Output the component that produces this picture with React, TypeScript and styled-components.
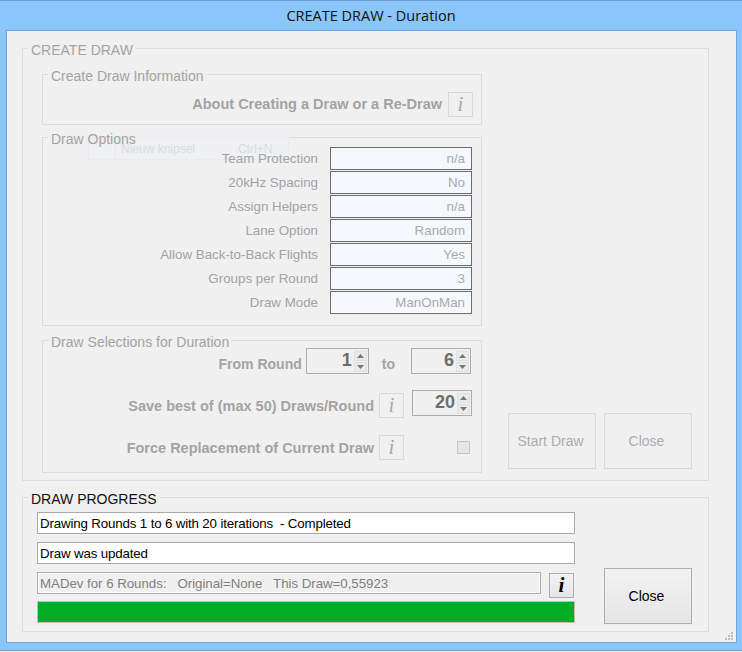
import * as React from 'react';
import styled, { createGlobalStyle } from 'styled-components';

const GlobalStyle = createGlobalStyle`
    html, body {
        margin: 0;
        padding: 0;
        background: #f0f0f0;
    }
    body {
        font-family: "Liberation Sans", Arial, sans-serif;
        font-size: 14px;
    }
`;

const DISABLED = '#a3a3a3';
const LINE = '#dcdcdc';

const OPTIONS = [
    ['Team Protection', 'n/a'],
    ['20kHz Spacing', 'No'],
    ['Assign Helpers', 'n/a'],
    ['Lane Option', 'Random'],
    ['Allow Back-to-Back Flights', 'Yes'],
    ['Groups per Round', '3'],
    ['Draw Mode', 'ManOnMan'],
];

const Spinner: React.FC<{ value: number; width: number }> = ({ value, width }) => (
    <SpinBox $width={width}>
        <SpinValue>{value}</SpinValue>
        <SpinButtons>
            <SpinButton>
                <svg width="7" height="4" viewBox="0 0 7 4">
                    <path d="M3.5 0L7 4H0z" fill="#777" />
                </svg>
            </SpinButton>
            <SpinButton>
                <svg width="7" height="4" viewBox="0 0 7 4">
                    <path d="M0 0h7L3.5 4z" fill="#777" />
                </svg>
            </SpinButton>
        </SpinButtons>
    </SpinBox>
);

const App: React.FC = () => (
    <Window>
        <GlobalStyle />
        <TitleBar>CREATE DRAW - Duration</TitleBar>
        <Panel>
            <Group $height={443}>
                <Legend>CREATE DRAW</Legend>
                <CreateLayout>
                    <LeftColumn>
                        <Group $height={61}>
                            <Legend>Create Draw Information</Legend>
                            <AboutRow>
                                <AboutLabel>About Creating a Draw or a Re-Draw</AboutLabel>
                                <InfoButton disabled>i</InfoButton>
                            </AboutRow>
                        </Group>
                        <Group $height={199}>
                            <Legend>Draw Options</Legend>
                            <GhostMenu>
                                <GhostIcon />
                                <GhostText>Nieuw knipsel</GhostText>
                                <GhostText>Ctrl+N</GhostText>
                            </GhostMenu>
                            <OptionList>
                                {OPTIONS.map(([label, value]) => (
                                    <OptionRow key={label}>
                                        <OptionLabel>{label}</OptionLabel>
                                        <OptionValue>{value}</OptionValue>
                                    </OptionRow>
                                ))}
                            </OptionList>
                        </Group>
                        <SelectionGroup $height={143}>
                            <Legend>Draw Selections for Duration</Legend>
                            <SelectionList>
                                <RoundRow>
                                    <RoundLabel>From Round</RoundLabel>
                                    <Spinner value={1} width={63} />
                                    <ToLabel>to</ToLabel>
                                    <Spinner value={6} width={60} />
                                </RoundRow>
                                <SaveRow>
                                    <BoldLabel>Save best of (max 50) Draws/Round</BoldLabel>
                                    <InfoButton disabled>i</InfoButton>
                                    <RaisedSpinner>
                                        <Spinner value={20} width={60} />
                                    </RaisedSpinner>
                                </SaveRow>
                                <ForceRow>
                                    <BoldLabel>Force Replacement of Current Draw</BoldLabel>
                                    <InfoButton disabled>i</InfoButton>
                                    <CheckBox />
                                </ForceRow>
                            </SelectionList>
                        </SelectionGroup>
                    </LeftColumn>
                    <DisabledActions>
                        <ActionButton disabled>Start Draw</ActionButton>
                        <ActionButton disabled>Close</ActionButton>
                    </DisabledActions>
                </CreateLayout>
            </Group>
            <ProgressGroup $height={145}>
                <ProgressLegend>DRAW PROGRESS</ProgressLegend>
                <ProgressLayout>
                    <ProgressColumn>
                        <MessageField>Drawing Rounds 1 to 6 with 20 iterations&nbsp; - Completed</MessageField>
                        <MessageField>Draw was updated</MessageField>
                        <DevRow>
                            <DevField>
                                MADev for 6 Rounds:&nbsp;&nbsp; Original=None&nbsp;&nbsp; This Draw=0,55923
                            </DevField>
                            <DevInfoButton>i</DevInfoButton>
                        </DevRow>
                        <ProgressBar />
                    </ProgressColumn>
                    <ProgressClose>Close</ProgressClose>
                </ProgressLayout>
            </ProgressGroup>
            <Grip width="8" height="8" viewBox="0 0 8 8">
                <path
                    d="M6 0h2v2H6zM3 3h2v2H3zM6 3h2v2H6zM0 6h2v2H0zM3 6h2v2H3zM6 6h2v2H6z"
                    fill="#bdbdbd"
                />
            </Grip>
        </Panel>
    </Window>
);

const Window = styled.div`
    box-sizing: border-box;
    width: 742px;
    height: 651px;
    overflow: hidden;
    background: #8ac5fb;
    border-top: 1px solid #6e9fd0;
    border-bottom: 1px solid #6e9fd0;
`;

const TitleBar = styled.div`
    height: 29px;
    line-height: 29px;
    text-align: center;
    font-family: "Open Sans", sans-serif;
    font-size: 14.5px;
    color: #111;
`;

const Panel = styled.div`
    position: relative;
    box-sizing: border-box;
    width: 731px;
    height: 613px;
    margin-left: 6px;
    padding: 7px 27px 0 15px;
    background: #f0f0f0;
    border: 1px solid #6fa5dc;
`;

const Group = styled.fieldset<{ $height: number }>`
    box-sizing: border-box;
    height: ${({ $height }) => $height}px;
    min-width: 0;
    margin: 0;
    padding: 0;
    border: 1px solid ${LINE};
`;

const SelectionGroup = styled(Group)`
    margin-top: 2px;
`;

const ProgressGroup = styled(Group)`
    margin-top: 6px;
`;

const Legend = styled.legend`
    position: relative;
    z-index: 1;
    margin-left: 5px;
    padding: 4px 3px 0;
    line-height: 16px;
    font-size: 14px;
    color: ${DISABLED};
`;

const ProgressLegend = styled(Legend)`
    color: #111;
`;

const CreateLayout = styled.div`
    display: flex;
    align-items: flex-end;
    gap: 26px;
    padding-left: 19px;
`;

const LeftColumn = styled.div`
    display: flex;
    flex-direction: column;
    gap: 2px;
    width: 440px;
    margin: 6px 0 7px;
`;

const AboutRow = styled.div`
    display: flex;
    justify-content: flex-end;
    align-items: center;
    gap: 6px;
    padding: 8px 8px 0 0;
`;

const BoldLabel = styled.span`
    font-weight: 700;
    font-size: 14.5px;
    color: ${DISABLED};
`;

const AboutLabel = styled(BoldLabel)`
    margin-top: -2px;
`;

const InfoButton = styled.button`
    box-sizing: border-box;
    flex: none;
    width: 25px;
    height: 25px;
    padding: 0;
    font-family: "Liberation Serif", serif;
    font-style: italic;
    font-weight: 700;
    font-size: 21px;
    line-height: 23px;
    color: #000;
    background: linear-gradient(#f2f2f2, #e6e6e6);
    border: 1px solid #adadad;

    &:disabled {
        color: #a9a9a9;
        font-weight: 400;
        background: #f0f0f0;
        border-color: #d9d9d9;
    }
`;

const GhostMenu = styled.div`
    position: absolute;
    display: flex;
    align-items: center;
    box-sizing: border-box;
    width: 201px;
    height: 23px;
    margin: -10px 0 0 45px;
    background: #eef0f2;
    border: 1px solid #e8eaec;
`;

const GhostIcon = styled.div`
    width: 26px;
    height: 21px;
    border-right: 1px solid #e6e8ea;
`;

const GhostText = styled.span`
    font-size: 12px;
    color: #dadcde;

    &:nth-child(2) {
        margin-left: 5px;
    }

    &:nth-child(3) {
        margin-left: 43px;
    }
`;

const OptionList = styled.div`
    position: relative;
    display: flex;
    flex-direction: column;
    gap: 1px;
    padding-right: 9px;
`;

const OptionRow = styled.div`
    display: flex;
    justify-content: flex-end;
    align-items: center;
    gap: 12px;
`;

const OptionLabel = styled.span`
    font-size: 13.33px;
    color: ${DISABLED};
`;

const OptionValue = styled.div`
    box-sizing: border-box;
    width: 142px;
    height: 23px;
    line-height: 21px;
    padding-right: 6px;
    text-align: right;
    font-size: 13.33px;
    color: #aaaaaa;
    background: #f5f9ff;
    border: 1px solid #6d6d6d;
`;

const SelectionList = styled.div`
    display: flex;
    flex-direction: column;
    padding-right: 9px;
`;

const RoundRow = styled.div`
    display: flex;
    justify-content: flex-end;
    align-items: center;
    height: 26px;
    margin: -2px 1px 0 0;
`;

const RoundLabel = styled(BoldLabel)`
    margin: 6px 4px 0 0;
    font-size: 14px;
`;

const ToLabel = styled(BoldLabel)`
    margin: 6px 16px 0 13px;
    font-size: 14px;
`;

const SaveRow = styled.div`
    display: flex;
    justify-content: flex-end;
    align-items: center;
    gap: 5px;
    margin-top: 19px;
`;

const RaisedSpinner = styled.div`
    align-self: flex-start;
    height: 23px;
    margin: -3px 0 0 3px;
`;

const ForceRow = styled.div`
    display: flex;
    justify-content: flex-end;
    align-items: center;
    gap: 5px;
    margin-top: 17px;
`;

const CheckBox = styled.div`
    box-sizing: border-box;
    width: 13px;
    height: 13px;
    margin: 0 2px 0 48px;
    background: #e6e6e6;
    border: 1px solid #c4c4c4;
`;

const SpinBox = styled.div<{ $width: number }>`
    box-sizing: border-box;
    display: flex;
    justify-content: flex-end;
    align-items: center;
    width: ${({ $width }) => $width}px;
    height: 26px;
    padding-right: 1px;
    background: #f0f0f0;
    border: 1px solid #acacb4;
`;

const SpinValue = styled.span`
    margin: -1px 2px 0 0;
    font-size: 18px;
    font-weight: 700;
    color: #6d6d6d;
`;

const SpinButtons = styled.div`
    display: flex;
    flex-direction: column;
    gap: 1px;
    width: 13px;
`;

const SpinButton = styled.div`
    box-sizing: border-box;
    display: flex;
    align-items: center;
    justify-content: center;
    height: 10px;
    background: #eaeaea;
    border: 1px solid #e0e0e0;
`;

const DisabledActions = styled.div`
    display: flex;
    gap: 8px;
    margin-bottom: 11px;
`;

const ActionButton = styled.button`
    box-sizing: border-box;
    flex: none;
    width: 88px;
    height: 56px;
    padding: 0 3px 0 0;
    font-family: "Liberation Sans", Arial, sans-serif;
    font-size: 14px;
    color: #000;
    background: linear-gradient(#f2f2f2, #e5e5e5);
    border: 1px solid #adadad;

    &:disabled {
        color: #adadad;
        background: #f0f0f0;
        border-color: #d9d9d9;
    }
`;

const ProgressClose = styled(ActionButton)`
    margin-top: 61px;
`;

const ProgressLayout = styled.div`
    display: flex;
    align-items: flex-start;
    gap: 29px;
    padding-left: 14px;
`;

const ProgressColumn = styled.div`
    display: flex;
    flex-direction: column;
    width: 538px;
    margin-top: 5px;
`;

const MessageField = styled.div`
    box-sizing: border-box;
    height: 22px;
    line-height: 22px;
    margin-bottom: 8px;
    padding-left: 2px;
    font-size: 13.33px;
    letter-spacing: -0.16px;
    color: #000;
    background: #fff;
    border: 1px solid #a9a9a9;
`;

const DevRow = styled.div`
    display: flex;
    align-items: flex-start;
    gap: 8px;
    height: 29px;
`;

const DevField = styled.div`
    box-sizing: border-box;
    width: 504px;
    height: 22px;
    line-height: 22px;
    padding-left: 2px;
    font-size: 13.33px;
    letter-spacing: -0.05px;
    color: #7f7f7f;
    background: #f0f0f0;
    border: 1px solid #acacac;
    box-shadow: inset 0 0 0 1px #fff;
`;

const DevInfoButton = styled(InfoButton)`
    margin-top: 1px;
`;

const ProgressBar = styled.div`
    box-sizing: border-box;
    height: 22px;
    background: #06ae28;
    border: 1px solid #bcbcbc;
`;

const Grip = styled.svg`
    position: absolute;
    right: 3px;
    bottom: 2px;
`;

export default App;
